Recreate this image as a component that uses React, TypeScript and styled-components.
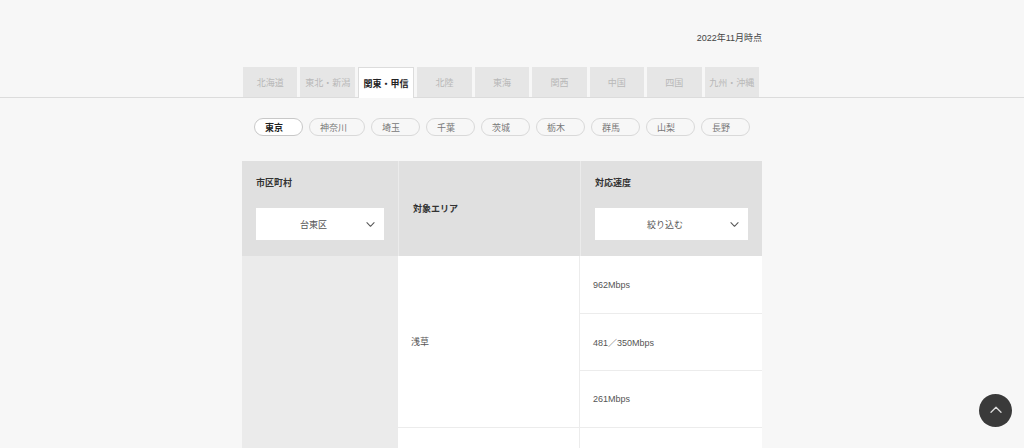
import { createGlobalStyle, styled } from "styled-components";

const regions = [
  "北海道",
  "東北・新潟",
  "関東・甲信",
  "北陸",
  "東海",
  "関西",
  "中国",
  "四国",
  "九州・沖縄",
];

const prefectures = [
  "東京",
  "神奈川",
  "埼玉",
  "千葉",
  "茨城",
  "栃木",
  "群馬",
  "山梨",
  "長野",
];

// the second area lies below the fold; only its empty top edge shows
const areas = [
  { name: "浅草", speeds: ["962Mbps", "481／350Mbps", "261Mbps"] },
  { name: "", speeds: [""] },
];

const GlobalStyle = createGlobalStyle`
  html, body {
    margin: 0;
    overflow: hidden;
    background: #f7f7f7;
  }
  body {
    font-family: "Liberation Sans", "Noto Sans CJK JP", sans-serif;
    font-size: 9px;
    color: #555;
  }
`;

function Chevron({ up = false }: { up?: boolean }) {
  return (
    <svg width={up ? 12 : 9} height={up ? 7 : 5} viewBox="0 0 12 7" fill="none">
      <path
        d={up ? "M1 6.2 6 1.2l5 5" : "M1 1l5 5 5-5"}
        stroke="currentColor"
        strokeWidth={up ? 1.3 : 1.5}
        strokeLinecap="round"
        strokeLinejoin="round"
      />
    </svg>
  );
}

export default function App() {
  const activeRegion = "関東・甲信";
  const activePref = "東京";

  return (
    <Page>
      <GlobalStyle />
      <Inner>
        <DateNote>2022年11月時点</DateNote>
      </Inner>

      <TabBar>
        <TabList>
          {regions.map((name) => (
            <Tab key={name} className={name === activeRegion ? "active" : ""}>
              {name}
            </Tab>
          ))}
        </TabList>
      </TabBar>

      <Inner>
        <PillRow>
          {prefectures.map((name) => (
            <Pill key={name} className={name === activePref ? "active" : ""}>
              {name}
            </Pill>
          ))}
        </PillRow>

        <Table>
          <HeadRow>
            <HeadCell>
              <HeadLabel>市区町村</HeadLabel>
              <Select>
                <SelectValue>台東区</SelectValue>
                <Chevron />
              </Select>
            </HeadCell>
            <HeadCell $center>
              <HeadLabel>対象エリア</HeadLabel>
            </HeadCell>
            <HeadCell>
              <HeadLabel>対応速度</HeadLabel>
              <Select>
                <SelectValue>絞り込む</SelectValue>
                <Chevron />
              </Select>
            </HeadCell>
          </HeadRow>

          <Body>
            <CityCell style={{ gridRow: `1 / span ${areas.length}` }} />
            {areas.map((area, i) => (
              <AreaGroup key={i}>
                <AreaCell>{area.name}</AreaCell>
                <SpeedList>
                  {area.speeds.map((s, j) => (
                    <SpeedCell key={j}>{s}</SpeedCell>
                  ))}
                </SpeedList>
              </AreaGroup>
            ))}
          </Body>
        </Table>
      </Inner>

      <ToTop aria-label="ページトップへ">
        <Chevron up />
      </ToTop>
    </Page>
  );
}

const Page = styled.div`
  min-height: 100vh;
  padding-top: 32px;
`;

const Inner = styled.div`
  width: 520px;
  margin-left: calc(50% - 270px);
`;

const DateNote = styled.p`
  margin: 0;
  text-align: right;
  line-height: 12px;
  color: #444;
`;

const TabBar = styled.div`
  margin-top: 23px;
  border-bottom: 1px solid #dcdcdc;
`;

const TabList = styled.ul`
  display: flex;
  align-items: flex-end;
  gap: 3px;
  width: 516px;
  margin: 0 0 0 calc(50% - 269px);
  padding: 0;
  list-style: none;
`;

const Tab = styled.li`
  flex: 1 1 0;
  height: 30px;
  display: flex;
  align-items: center;
  justify-content: center;
  box-sizing: border-box;
  background: #e6e6e6;
  color: #b8b8b8;
  white-space: nowrap;
  &.active {
    height: 31px;
    margin-bottom: -1px;
    background: #fff;
    border: 1px solid #dcdcdc;
    border-bottom: none;
    color: #222;
    font-weight: bold;
  }
`;

const PillRow = styled.div`
  display: flex;
  justify-content: center;
  gap: 6px;
  margin-top: 20px;
`;

const Pill = styled.button`
  min-width: 49px;
  height: 18px;
  box-sizing: border-box;
  padding: 0 17px 0 10px;
  border: 1px solid #d9d9d9;
  border-radius: 9px;
  background: transparent;
  font: inherit;
  color: #777;
  text-align: left;
  white-space: nowrap;
  cursor: pointer;
  &.active {
    background: #fff;
    border-color: #c8c8c8;
    color: #222;
    font-weight: bold;
  }
`;

const Table = styled.div`
  margin-top: 25px;
`;

const HeadRow = styled.div`
  display: grid;
  grid-template-columns: 156px 181px 1fr;
  gap: 1px;
  background: #ebebeb;
`;

const HeadCell = styled.div<{ $center?: boolean }>`
  display: flex;
  flex-direction: column;
  justify-content: ${(p) => (p.$center ? "center" : "flex-start")};
  height: 95px;
  box-sizing: border-box;
  padding: 16px 14px;
  background: #e0e0e0;
`;

const HeadLabel = styled.span`
  line-height: 12px;
  font-weight: bold;
  color: #333;
`;

const Select = styled.div`
  display: flex;
  align-items: center;
  height: 32px;
  margin-top: 19px;
  padding: 0 9px 0 5px;
  background: #fff;
`;

const SelectValue = styled.span`
  flex: 1;
  text-align: center;
  color: #555;
`;

const Body = styled.div`
  display: grid;
  grid-template-columns: 156px 1fr;
`;

const CityCell = styled.div`
  grid-column: 1;
  background: #ebebeb;
`;

const AreaGroup = styled.div`
  grid-column: 2;
  display: grid;
  grid-template-columns: 182px 1fr;
  background: #fff;
  border-bottom: 1px solid #ececec;
`;

const AreaCell = styled.div`
  display: flex;
  align-items: center;
  padding-left: 13px;
  border-right: 1px solid #ececec;
  color: #555;
`;

const SpeedList = styled.div`
  display: flex;
  flex-direction: column;
`;

const SpeedCell = styled.div`
  display: flex;
  align-items: center;
  height: 57px;
  box-sizing: border-box;
  padding-left: 13px;
  color: #555;
  & + & {
    border-top: 1px solid #ececec;
  }
`;

const ToTop = styled.button`
  position: fixed;
  right: 12px;
  bottom: 21px;
  width: 33px;
  height: 33px;
  display: flex;
  align-items: center;
  justify-content: center;
  padding: 0 0 2px;
  border: none;
  border-radius: 50%;
  background: #3a3a3a;
  color: #ddd;
  cursor: pointer;
`;
